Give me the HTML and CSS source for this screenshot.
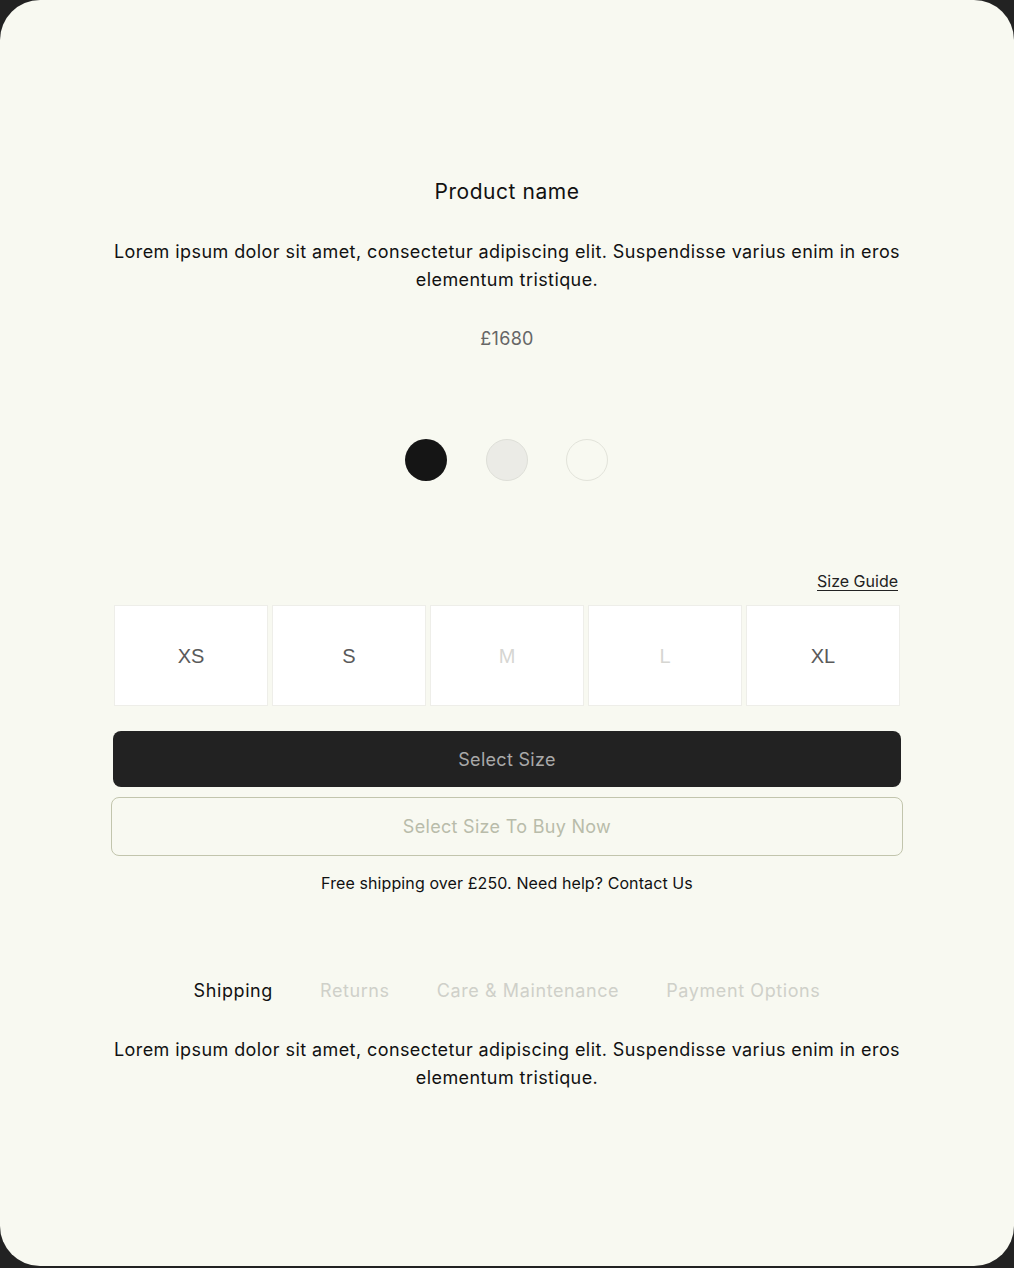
FILE: index.html
```html
<!DOCTYPE html>
<html lang="en">
<head>
<meta charset="utf-8">
<title>Product</title>
<link rel="stylesheet" href="styles.css">
</head>
<body>
<main class="card">
  <section class="product">
    <h1 class="title">Product name</h1>
    <p class="desc">Lorem ipsum dolor sit amet, consectetur adipiscing elit. Suspendisse varius enim in eros elementum tristique.</p>
    <p class="price">£1680</p>
    <div class="swatches">
      <span class="swatch swatch-black"></span>
      <span class="swatch swatch-grey"></span>
      <span class="swatch swatch-cream"></span>
    </div>
    <div class="size-head"><a class="size-guide" href="#">Size Guide</a></div>
    <div class="sizes">
      <div class="size">XS</div>
      <div class="size">S</div>
      <div class="size size-off">M</div>
      <div class="size size-off">L</div>
      <div class="size">XL</div>
    </div>
    <button class="btn btn-dark">Select Size</button>
    <button class="btn btn-outline">Select Size To Buy Now</button>
    <p class="shipping">Free shipping over £250. Need help? Contact Us</p>
    <nav class="tabs">
      <span class="tab tab-active">Shipping</span>
      <span class="tab">Returns</span>
      <span class="tab">Care &amp; Maintenance</span>
      <span class="tab">Payment Options</span>
    </nav>
    <p class="desc desc-tab">Lorem ipsum dolor sit amet, consectetur adipiscing elit. Suspendisse varius enim in eros elementum tristique.</p>
  </section>
</main>
</body>
</html>
```
FILE: styles.css
```css
* { box-sizing: border-box; }
html, body { margin: 0; padding: 0; }
body {
  background: #222222;
  font-family: Inter, "Liberation Sans", sans-serif;
  color: #111;
  width: 1014px;
  height: 1268px;
}
.card {
  width: 1014px;
  height: 1266px;
  background: #f8f9f1;
  border-radius: 40px;
  padding-top: 178px;
}
.product {
  width: 788px;
  margin: 0 auto;
  display: flex;
  flex-direction: column;
  align-items: stretch;
  text-align: center;
}
.title {
  margin: 0;
  font-size: 21px;
  line-height: 28px;
  font-weight: 400;
  color: #111;
  letter-spacing: 0.55px;
}
.desc {
  margin: 32px 0 0;
  font-size: 18px;
  line-height: 28px;
  color: #111;
  letter-spacing: 0.42px;
}
.price {
  margin: 31px 0 0;
  font-size: 18px;
  line-height: 28px;
  color: #666;
  letter-spacing: 0.3px;
}
.swatches {
  margin-top: 86px;
  display: flex;
  justify-content: center;
  gap: 38.5px;
  padding-right: 1px;
}
.swatch {
  width: 42px;
  height: 42px;
  border-radius: 50%;
  display: block;
}
.swatch-black { background: #151515; }
.swatch-grey { background: #ebebe6; border: 1px solid #dedfd8; }
.swatch-cream { background: #f8f9f1; border: 1.5px solid #e2e3da; }
.size-head {
  margin-top: 88px;
  display: flex;
  justify-content: flex-end;
  padding-right: 3px;
  line-height: 24px;
}
.size-guide {
  font-size: 16px;
  color: #222;
  text-decoration: underline;
  text-underline-offset: 3px;
  letter-spacing: 0;
}
.sizes {
  margin-top: 12px;
  display: grid;
  grid-template-columns: repeat(5, 1fr);
  gap: 4px;
  padding: 0 1px 0 1px;
}
.size {
  height: 101px;
  background: #fff;
  border: 1.5px solid #eeeee9;
  display: flex;
  align-items: center;
  justify-content: center;
  padding-top: 2px;
  font-family: "Liberation Sans", Arial, sans-serif;
  font-size: 20px;
  color: #5a5a5a;
}
.size-off { color: #d6d6d2; }
.btn {
  display: block;
  width: 100%;
  font-family: Inter, "Liberation Sans", sans-serif;
  font-size: 18px;
  border-radius: 8px;
  letter-spacing: 0.3px;
  cursor: pointer;
}
.btn-dark {
  margin-top: 25px;
  height: 56px;
  background: #222;
  color: #a9a9a9;
  border: none;
}
.btn-outline {
  margin: 10px -2px 0;
  width: calc(100% + 4px);
  height: 59px;
  background: transparent;
  color: #b9bcaa;
  border: 1.5px solid #c2c5ad;
}
.shipping {
  margin: 15px 0 0;
  font-size: 16px;
  line-height: 24px;
  color: #111;
  letter-spacing: 0.1px;
}
.tabs {
  margin-top: 82px;
  display: flex;
  justify-content: center;
  gap: 47px;
  font-size: 18px;
  line-height: 28px;
  letter-spacing: 0.6px;
}
.tab { color: #cfd0c9; }
.tab-active { color: #111; }
.desc-tab { margin-top: 31px; }
```
